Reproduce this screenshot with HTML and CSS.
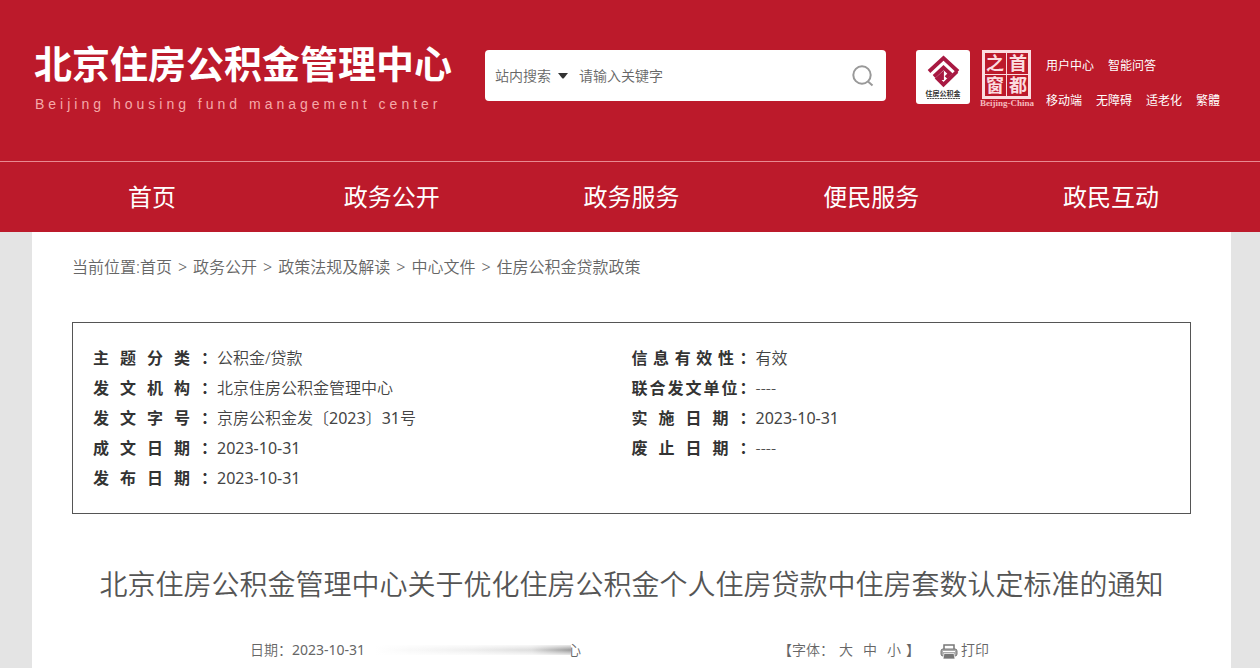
FILE: index.html
```html
<!DOCTYPE html>
<html lang="zh-CN">
<head>
<meta charset="utf-8">
<meta name="viewport" content="width=device-width, initial-scale=1">
<title>北京住房公积金管理中心</title>
<link rel="stylesheet" href="styles.css">
</head>
<body>
<header class="header">
  <div class="masthead">
    <div class="brand">
      <div class="brand-name">北京住房公积金管理中心</div>
      <div class="brand-sub">Beijing housing fund management center</div>
    </div>
    <form class="search" role="search">
      <select class="search-scope" aria-label="搜索范围"><option>站内搜索</option></select>
      <svg class="caret" viewBox="0 0 10 6" aria-hidden="true"><path d="M0 0h10L6 5Q5 6 4 5z" fill="#333"/></svg>
      <input class="search-input" type="text" placeholder="请输入关键字" aria-label="请输入关键字">
      <button class="search-button" type="button" aria-label="搜索">
        <svg viewBox="0 0 22 22" width="22" height="22" fill="none" stroke="#999" stroke-width="2"><circle cx="10" cy="10" r="8.700"/><path d="M16 16.500l4.500 4"/></svg>
      </button>
    </form>
    <div class="emblems">
      <a href="#" aria-label="住房公积金">
        <svg class="emblem-fund" viewBox="0 0 54 54" width="54" height="54">
          <rect width="54" height="54" rx="3" fill="#fff"/>
          <g fill="none" stroke="#a81942" stroke-width="3.800">
            <path d="M13 21.500L27.500 8 42 21.500"/>
            <path d="M18 26.500L27.500 17.500 34 23.500 30 27.500"/>
            <path d="M41 21.500L27.500 34.500 21.500 28.500 26 24.500V30"/>
          </g>
          <text class="emblem-caption" x="27" y="46" text-anchor="middle">住房公积金</text>
          <path d="M11 48.500h33" stroke="#555" stroke-dasharray="2 .6"/>
        </svg>
      </a>
      <a href="#" aria-label="首都之窗">
        <svg class="emblem-capital" viewBox="0 0 54 58" width="54" height="58">
          <rect x="3.500" y="1.500" width="46" height="46" fill="none" stroke="#fbdde0" stroke-width="3"/>
          <path d="M26.500 2v45M4 24.500h45" stroke="#fbdde0"/>
          <g class="seal" text-anchor="middle">
            <text x="15" y="20">之</text><text x="38" y="20">首</text>
            <text x="15" y="42">窗</text><text x="38" y="42">都</text>
          </g>
          <text class="seal-caption" x="27" y="56" text-anchor="middle">Beijing-China</text>
        </svg>
      </a>
    </div>
    <nav class="tools" aria-label="快捷入口">
      <div class="tools-row"><a href="#">用户中心</a><a href="#">智能问答</a></div>
      <div class="tools-row"><a href="#">移动端</a><a href="#">无障碍</a><a href="#">适老化</a><a href="#">繁體</a></div>
    </nav>
  </div>
  <nav class="main-nav" aria-label="主导航">
    <a href="#">首页</a><a href="#">政务公开</a><a href="#">政务服务</a><a href="#">便民服务</a><a href="#">政民互动</a>
  </nav>
</header>
<main class="page">
  <nav class="crumbs" aria-label="当前位置">
    <span>当前位置:<a href="#">首页</a></span><span>&gt;</span><a href="#">政务公开</a><span>&gt;</span><a href="#">政策法规及解读</a><span>&gt;</span><a href="#">中心文件</a><span>&gt;</span><a href="#">住房公积金贷款政策</a>
  </nav>
  <section class="info">
    <dl class="fields">
      <dt>主题分类：</dt><dd>公积金/贷款</dd>
      <dt>发文机构：</dt><dd>北京住房公积金管理中心</dd>
      <dt>发文字号：</dt><dd>京房公积金发〔<span class="digits">2023</span>〕<span class="digits">31</span>号</dd>
      <dt>成文日期：</dt><dd><time class="digits">2023-10-31</time></dd>
      <dt>发布日期：</dt><dd><time class="digits">2023-10-31</time></dd>
    </dl>
    <dl class="fields">
      <dt>信息有效性：</dt><dd>有效</dd>
      <dt>联合发文单位：</dt><dd>----</dd>
      <dt>实施日期：</dt><dd><time class="digits">2023-10-31</time></dd>
      <dt>废止日期：</dt><dd>----</dd>
    </dl>
  </section>
  <h1 class="title">北京住房公积金管理中心关于优化住房公积金个人住房贷款中住房套数认定标准的通知</h1>
  <div class="meta">
    <div class="meta-source">
      <span>日期：<time class="digits">2023-10-31</time></span>
      <span class="source"><span class="smear"></span>心</span>
    </div>
    <div class="meta-tools">
      <div class="font-size">
        <span>【字体：</span>
        <div class="sizes"><button type="button">大</button><button type="button">中</button><button type="button">小</button></div>
        <span>】</span>
      </div>
      <button class="print" type="button">
        <svg viewBox="0 0 18 20" width="18" height="20"><path d="M4 9V5h10v4" fill="none" stroke="#777" stroke-width="1.500"/><rect x="1" y="9" width="16" height="7" rx="2" fill="#aaa" stroke="#777"/><path d="M3 11.500h12" stroke="#fff"/><path d="M4 13.500h10l1 5.500H3z" fill="#777" stroke="#fff" stroke-width=".7"/></svg>
        打印
      </button>
    </div>
  </div>
</main>
</body>
</html>
```
FILE: styles.css
```css
* { box-sizing: border-box; }
body {
  margin: 0;
  background: #e4e4e4;
  color: #444;
  font-family: "Noto Sans", "Noto Sans CJK SC", sans-serif;
  font-size: 16px;
  font-weight: 350;
  text-spacing-trim: space-all;
}
a { color: inherit; text-decoration: none; }
button, input, select {
  margin: 0;
  padding: 0;
  border: 0;
  background: none;
  color: inherit;
  font: inherit;
}
.header { background: #bc1a2b; color: #fff; }
.masthead {
  display: flex;
  align-items: flex-start;
  height: 161px;
  padding: 38px 32px 0 34px;
}
.brand { flex: 0 0 451px; }
.brand-name { font-size: 38px; font-weight: 700; line-height: 50px; white-space: nowrap; }
.brand-sub {
  margin-top: 6px;
  padding-left: 1px;
  color: #f5a9a9;
  font: 400 14px/20px "Liberation Sans", sans-serif;
  letter-spacing: 4px;
  white-space: nowrap;
}
.search {
  display: flex;
  flex: 1;
  align-items: center;
  height: 51px;
  margin: 12px 30px 0 0;
  padding: 0 12px 0 10px;
  border-radius: 4px;
  background: #fff;
  color: #666;
  font-size: 14px;
}
.search-scope { flex: none; width: 56px; appearance: none; }
.caret { width: 10px; height: 6px; margin: 0 11px 0 7px; }
.search-input { flex: 1; min-width: 0; outline: 0; }
.search-input::placeholder { color: #666; opacity: 1; }
.search-button { display: flex; }
.emblems { display: flex; gap: 10px; margin-top: 12px; }
.emblems a { display: block; }
.emblems svg { display: block; }
.emblem-caption { fill: #333; font-size: 7px; font-weight: 700; }
.seal { fill: #fbdde0; font-size: 18px; font-weight: 700; }
.seal-caption { fill: #f5b9bd; font: 700 9px "Liberation Serif", serif; }
.tools { flex: 0 0 182px; margin: 18px 0 0 12px; font-size: 12px; font-weight: 400; line-height: 20px; }
.tools-row { display: flex; gap: 14px; white-space: nowrap; }
.tools-row + .tools-row { margin-top: 15px; }
.main-nav {
  display: grid;
  grid-template-columns: repeat(5, 1fr);
  padding: 0 29px 0 32px;
  border-top: 1px solid #e98991;
  font-size: 24px;
  font-weight: 400;
  line-height: 70px;
  text-align: center;
}
.page { margin: 0 29px 0 32px; padding: 20px 40px; background: #fff; }
.crumbs { display: flex; gap: 6px; color: #666; line-height: 30px; }
.info {
  display: grid;
  grid-template-columns: 1fr 1fr;
  margin-top: 40px;
  padding: 20px;
  border: 1px solid #555;
}
.fields {
  display: grid;
  grid-template-columns: 124px 1fr;
  grid-auto-rows: 30px;
  margin: 0;
  line-height: 30px;
}
.fields dt { color: #333; font-weight: 700; text-align: justify; text-align-last: justify; }
.fields dd { margin: 0; }
.digits { font-weight: 400; }
.title {
  margin: 46px 0 0;
  color: #555;
  font-size: 28px;
  font-weight: 350;
  line-height: 48px;
  text-align: center;
  white-space: nowrap;
}
.meta {
  display: grid;
  grid-template-columns: 528px 1fr;
  margin-top: 32px;
  padding-left: 178px;
  color: #666;
  font-size: 14px;
  line-height: 20px;
}
.meta-source, .meta-tools, .font-size, .sizes, .print { display: flex; align-items: center; }
.source { position: relative; width: 216px; text-align: right; }
.smear {
  position: absolute;
  inset: 5px 10px 5px 10px;
  background: linear-gradient(#fffc, #fff0 50%, #fffc), linear-gradient(90deg, #fff, #eee 50%, #ddd 80%, #999);
}
.meta-tools { gap: 20px; }
.font-size { gap: 5px; }
.sizes { gap: 10px; }
.print { gap: 3px; }
```
